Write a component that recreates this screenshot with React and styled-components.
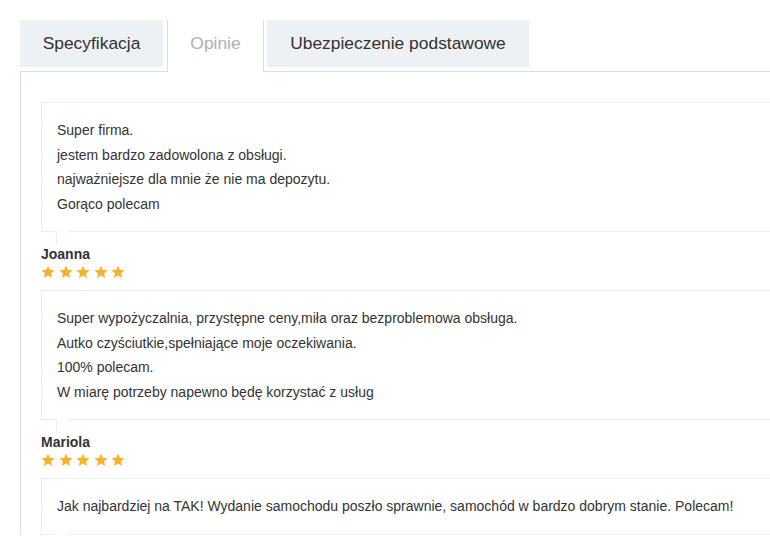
import React from "react";
import styled, { createGlobalStyle } from "styled-components";

const GlobalStyle = createGlobalStyle`
  html, body {
    margin: 0;
    padding: 0;
    overflow: hidden;
    background: #fff;
  }
  body {
    font-family: "Liberation Sans", Arial, sans-serif;
    color: #333;
  }
`;

const Page = styled.div`
  padding: 20px 0 0 20px;
`;

const TabList = styled.div`
  display: flex;
  align-items: flex-start;
  position: relative;
  z-index: 1;
  margin-bottom: -1px;
`;

const Tab = styled.button`
  display: flex;
  align-items: center;
  justify-content: center;
  box-sizing: border-box;
  width: ${(p) => p.$width}px;
  height: ${(p) => (p.$active ? 52 : 47)}px;
  margin-right: ${(p) => p.$gap}px;
  padding: 0 0 ${(p) => (p.$active ? 6 : 1)}px;
  border: none;
  border-left: ${(p) => (p.$active ? "1px solid #dedede" : "none")};
  border-right: ${(p) => (p.$active ? "1px solid #dedede" : "none")};
  background: ${(p) => (p.$active ? "#fff" : "#eef1f3")};
  color: ${(p) => (p.$active ? "#b0b0b0" : "#333")};
  font-family: "Liberation Sans", Arial, sans-serif;
  font-size: 17.4px;
  cursor: pointer;
`;

const Panel = styled.div`
  width: 790px;
  border-top: 1px solid #dedede;
  border-left: 1px solid #dedede;
  padding: 30px 0 0 20px;
`;

const Bubble = styled.div`
  position: relative;
  border: 1px solid #ececec;
  padding: 15px 15px;
  font-size: 14px;
  line-height: 24.5px;
  color: #333;

  &::before {
    content: "";
    position: absolute;
    left: 14px;
    top: calc(100% + 1px);
    border-top: 12px solid #ececec;
    border-right: 13px solid transparent;
  }

  &::after {
    content: "";
    position: absolute;
    left: 15px;
    top: 100%;
    border-top: 12px solid #fff;
    border-right: 13px solid transparent;
  }
`;

const Line = styled.div``;

const Meta = styled.div`
  margin: 14px 0 11px;
`;

const Author = styled.div`
  font-size: 14px;
  font-weight: 700;
  line-height: 17px;
  color: #333;
`;

const Stars = styled.div`
  display: flex;
  gap: 3.5px;
  margin-top: 2px;
  height: 14px;
  align-items: center;
`;

const Star = () => (
  <svg width="14" height="14" viewBox="0 0 24 24">
    <path
      fill="#f7b12a"
      d="M12 1.2l3.3 7.2 7.8.8-5.9 5.2 1.8 7.7L12 18.1l-7 4 1.8-7.7L.9 9.2l7.8-.8z"
    />
  </svg>
);

const reviews = [
  {
    lines: [
      "Super firma.",
      "jestem bardzo zadowolona z obsługi.",
      "najważniejsze dla mnie że nie ma depozytu.",
      "Gorąco polecam",
    ],
    author: "Joanna",
  },
  {
    lines: [
      "Super wypożyczalnia, przystępne ceny,miła oraz bezproblemowa obsługa.",
      "Autko czyściutkie,spełniające moje oczekiwania.",
      "100% polecam.",
      "W miarę potrzeby napewno będę korzystać z usług",
    ],
    author: "Mariola",
  },
  {
    lines: [
      "Jak najbardziej na TAK! Wydanie samochodu poszło sprawnie, samochód w bardzo dobrym stanie. Polecam!",
    ],
  },
];

export default function App() {
  return (
    <>
      <GlobalStyle />
      <Page>
        <TabList>
          <Tab $width={143} $gap={4}>Specyfikacja</Tab>
          <Tab $width={97} $gap={3} $active>
            Opinie
          </Tab>
          <Tab $width={262} $gap={0}>Ubezpieczenie podstawowe</Tab>
        </TabList>
        <Panel>
          {reviews.map((r, idx) => (
            <div key={idx}>
              <Bubble>
                {r.lines.map((l) => (
                  <Line key={l}>{l}</Line>
                ))}
              </Bubble>
              {r.author && (
                <Meta>
                  <Author>{r.author}</Author>
                  <Stars>
                    {[0, 1, 2, 3, 4].map((i) => (
                      <Star key={i} />
                    ))}
                  </Stars>
                </Meta>
              )}
            </div>
          ))}
        </Panel>
      </Page>
    </>
  );
}
